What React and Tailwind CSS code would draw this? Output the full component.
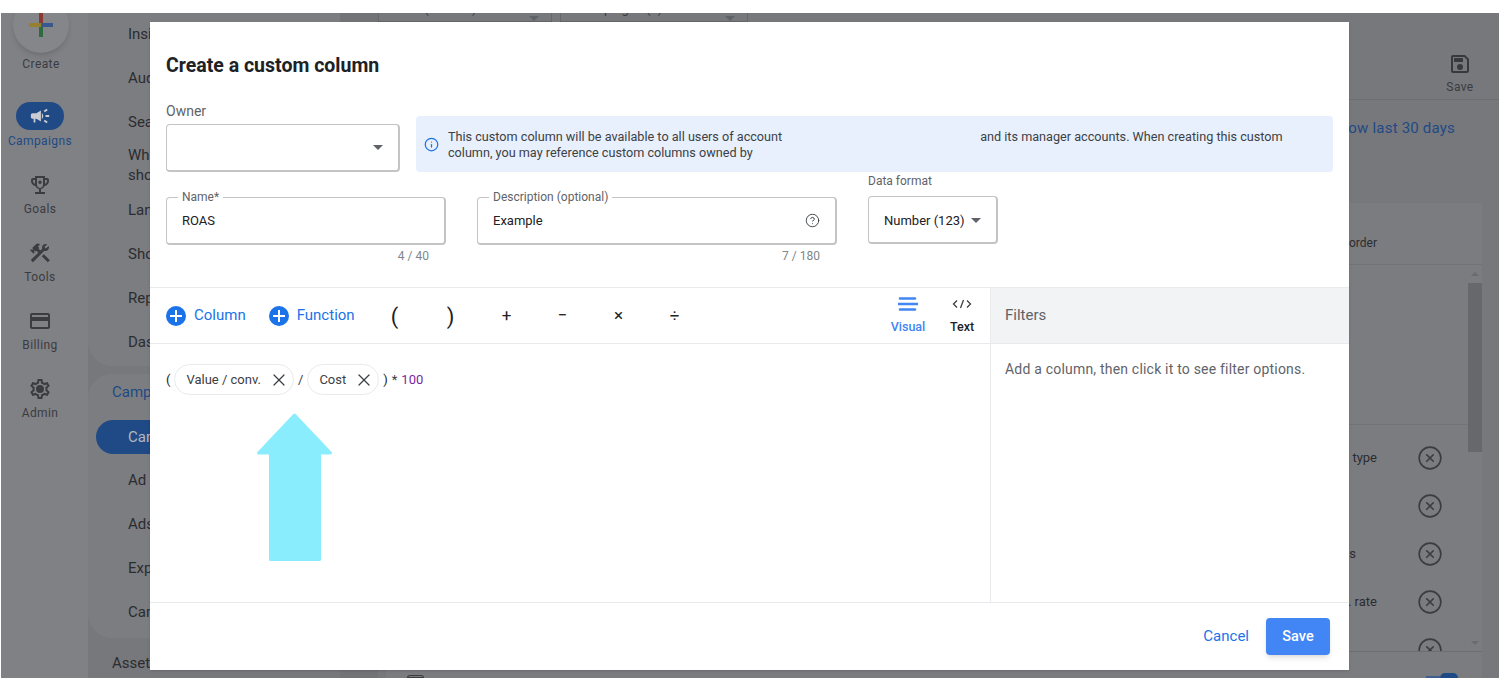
import React from "react";
import { CircleHelp, CircleX, Info, X } from "lucide-react";

const navTop = ["Insights", "Audiences", "Search terms"];
const navMid = ["Landing pages", "Shopping", "Reports", "Dashboards"];
const navCampaigns = ["Ad groups", "Ads", "Experiments", "Campaign groups"];
const operators = ["(", ")", "+", "−", "×", "÷"];
const rows = [
  { label: "Campaign type", pad: "pr-0" },
  { label: "", pad: "pr-0" },
  { label: "Conversions", pad: "pr-[21px]" },
  { label: "Conv. rate", pad: "pr-0" },
  { label: "", pad: "pr-0" },
];

const MaterialIcon = ({ d, className }) => (
  <svg viewBox="0 0 24 24" fill="currentColor" fillRule="evenodd" className={className}>
    <path d={d} />
  </svg>
);

const Caret = ({ className }) => (
  <div className={`w-0 h-0 border-x-[5px] border-x-transparent border-t-[5px] border-t-[#5f6368] ${className || ""}`} />
);

const SideItem = ({ label, children }) => (
  <div className="h-[68px] flex flex-col items-center text-[#3b3c3f]">
    <div className="h-[36px] flex items-center justify-center">{children}</div>
    <span className="-mt-[2px] text-xs leading-[16px] tracking-[0.4px]">{label}</span>
  </div>
);

const PlusButton = ({ label }) => (
  <button className="flex items-center gap-2 text-[15px] text-[#1a73e8]">
    <svg viewBox="0 0 20 20" className="w-5 h-5">
      <circle cx="10" cy="10" r="10" fill="#1a73e8" />
      <path d="M10 4v12M4 10h12" stroke="#fff" strokeWidth="2" />
    </svg>
    {label}
  </button>
);

const Chip = ({ label }) => (
  <span className="h-[31px] flex items-center gap-2 pl-[11px] pr-1 rounded-full border border-[#e8eaed] text-[#3c4043]">
    {label}
    <X className="w-5 h-5 text-[#3c4043]" strokeWidth={1.5} />
  </span>
);

const Field = ({ label, value, count, width, children }) => (
  <div className={`${width} mt-[25px]`}>
    <div className="relative h-[48px] flex items-center justify-between px-[15px] border border-[#c4c4c4] border-b-2 border-r-2 rounded-[4px] text-[13px] text-[#202124]">
      <span className="absolute left-[11px] -top-[8px] px-1 bg-white text-xs leading-[14px] text-[#5f6368]">{label}</span>
      {value}
      {children}
    </div>
    <div className="mt-1 pr-[17px] text-right text-xs leading-[14px] text-[#80868b]">{count}</div>
  </div>
);

const App = () => {
  return (
    <div className="w-[1500px] h-[682px] bg-white pt-[13px] pb-[4px] px-px font-['Roboto',sans-serif]">
      <div className="relative h-full flex overflow-hidden bg-[#77787c]">
        {/* Sidebar */}
        <div className="w-[87px] shrink-0 bg-[#808185] flex flex-col pr-[7px]">
          <div className="flex flex-col items-center">
            <div className="w-14 h-14 -mt-4 rounded-full bg-[#85868a] shadow-md flex items-center justify-center">
              <svg viewBox="0 0 24 24" className="w-6 h-6">
                <path d="M12 0v12" stroke="#8a3a33" strokeWidth="4" />
                <path d="M12 12v12" stroke="#2f6b3e" strokeWidth="4" />
                <path d="M0 12h12" stroke="#94802f" strokeWidth="4" />
                <path d="M12 12h12" stroke="#38598f" strokeWidth="4" />
              </svg>
            </div>
            <span className="mt-[3px] text-xs leading-[16px] tracking-[0.4px] text-[#3b3c3f]">Create</span>
          </div>
          <div className="mt-[30px] pr-[2px] flex flex-col items-center">
            <div className="w-12 h-7 rounded-full bg-[#1f4a85] flex items-center justify-center">
              <MaterialIcon
                className="w-[22px] h-[22px] text-[#c9ccd2]"
                d="M18 11v2h4v-2h-4zm-2 6.61c.96.71 2.21 1.65 3.2 2.39.4-.53.8-1.07 1.2-1.6-.99-.74-2.24-1.68-3.2-2.4-.4.54-.8 1.08-1.2 1.61zM20.4 5.6c-.4-.53-.8-1.07-1.2-1.6-.99.74-2.24 1.68-3.2 2.4.4.53.8 1.07 1.2 1.6.96-.72 2.21-1.65 3.2-2.4zM4 9c-1.1 0-2 .9-2 2v2c0 1.1.9 2 2 2h1v4h2v-4h1l5 3V6L8 9H4zm11.5 3c0-1.33-.58-2.53-1.5-3.35v6.69c.92-.81 1.5-2.01 1.5-3.34z"
              />
            </div>
            <span className="mt-[3px] text-xs leading-[16px] tracking-[0.4px] text-[#1f4a85]">Campaigns</span>
          </div>
          <div className="mt-[18px] pr-[2px]">
            <SideItem label="Goals">
              <MaterialIcon
                className="w-6 h-6"
                d="M19 5h-2V3H7v2H5c-1.1 0-2 .9-2 2v1c0 2.55 1.92 4.63 4.39 4.94.63 1.5 1.98 2.63 3.61 2.96V19H7v2h10v-2h-4v-3.1c1.63-.33 2.98-1.46 3.61-2.96C19.08 12.63 21 10.55 21 8V7c0-1.1-.9-2-2-2zM5 8V7h2v3.82C5.84 10.4 5 9.3 5 8zm10 4c0 1.65-1.35 3-3 3s-3-1.35-3-3V5h6v7zm4-4c0 1.3-.84 2.4-2 2.82V7h2v1zM12 7.5a1.7 1.7 0 1 0 0 3.4 1.7 1.7 0 0 0 0-3.4z"
              />
            </SideItem>
            <SideItem label="Tools">
              <MaterialIcon
                className="w-6 h-6"
                d="M13.78 15.3l6 6 2.11-2.16-6-6zM17.5 10c1.93 0 3.5-1.57 3.5-3.5 0-.58-.16-1.12-.41-1.6l-2.7 2.7-1.49-1.49 2.7-2.7c-.48-.25-1.02-.41-1.6-.41C15.57 3 14 4.57 14 6.5c0 .41.08.8.21 1.16l-1.85 1.85-1.78-1.78.71-.71-1.41-1.41L12 3.49c-1.17-1.17-3.07-1.17-4.24 0L4.22 7.03l1.41 1.41H2.81l-.71.71 3.54 3.54.71-.71V9.15l1.41 1.41.71-.71 1.78 1.78-7.41 7.41 2.12 2.12L16.34 9.79c.36.13.75.21 1.16.21z"
              />
            </SideItem>
            <SideItem label="Billing">
              <MaterialIcon
                className="w-6 h-6"
                d="M20 4H4c-1.1 0-2 .9-2 2v12c0 1.1.9 2 2 2h16c1.1 0 2-.9 2-2V6c0-1.1-.9-2-2-2zm0 14H4v-6h16v6zm0-10H4V6h16v2z"
              />
            </SideItem>
            <SideItem label="Admin">
              <MaterialIcon
                className="w-6 h-6 -mt-px"
                d="M19.43 12.98c.04-.32.07-.64.07-.98 0-.34-.03-.66-.07-.98l2.11-1.65c.19-.15.24-.42.12-.64l-2-3.46c-.09-.16-.26-.25-.44-.25-.06 0-.12.01-.17.03l-2.49 1c-.52-.4-1.08-.73-1.69-.98l-.38-2.65C14.46 2.18 14.25 2 14 2h-4c-.25 0-.46.18-.49.42l-.38 2.65c-.61.25-1.17.59-1.69.98l-2.49-1c-.06-.02-.12-.03-.18-.03-.17 0-.34.09-.43.25l-2 3.46c-.13.22-.07.49.12.64l2.11 1.65c-.04.32-.07.65-.07.98 0 .33.03.66.07.98l-2.11 1.65c-.19.15-.24.42-.12.64l2 3.46c.09.16.26.25.44.25.06 0 .12-.01.17-.03l2.49-1c.52.4 1.08.73 1.69.98l.38 2.65c.03.24.24.42.49.42h4c.25 0 .46-.18.49-.42l.38-2.65c.61-.25 1.17-.59 1.69-.98l2.49 1c.06.02.12.03.18.03.17 0 .34-.09.43-.25l2-3.46c.12-.22.07-.49-.12-.64l-2.11-1.65zm-1.98-1.71c.04.31.05.52.05.73 0 .21-.02.43-.05.73l-.14 1.13.89.7 1.08.84-.7 1.21-1.27-.51-1.04-.42-.9.68c-.43.32-.84.56-1.25.73l-1.06.43-.16 1.13-.2 1.35h-1.4l-.19-1.35-.16-1.13-1.06-.43c-.43-.18-.83-.41-1.23-.71l-.91-.7-1.06.43-1.27.51-.7-1.21 1.08-.84.89-.7-.14-1.13c-.03-.31-.05-.54-.05-.74s.02-.43.05-.73l.14-1.13-.89-.7-1.08-.84.7-1.21 1.27.51 1.04.42.9-.68c.43-.32.84-.56 1.25-.73l1.06-.43.16-1.13.2-1.35h1.39l.19 1.35.16 1.13 1.06.43c.43.18.83.41 1.23.71l.91.7 1.06-.43 1.27-.51.7 1.21-1.07.85-.89.7.14 1.13zM12 8a4 4 0 1 0 0 8 4 4 0 0 0 0-8z"
              />
            </SideItem>
          </div>
        </div>

        {/* Nav */}
        <div className="w-[252px] shrink-0 flex flex-col text-[15px] text-[#2b2c2f]">
          <div className="h-[353px] rounded-bl-[24px] bg-[#7c7d81] pl-10 flex flex-col">
            {navTop.map((item, i) => (
              <div key={item} className={`h-[44px] flex items-center ${i === 0 ? "-mt-[1px]" : ""}`}>{item}</div>
            ))}
            <div className="h-[42px] leading-[20px] mt-[1px] w-[150px]">When and where ads showed</div>
            <div className="h-[1px]" />
            {navMid.map((item) => (
              <div key={item} className="h-[44px] flex items-center">{item}</div>
            ))}
          </div>
          <div className="mt-2 h-[264px] rounded-l-[24px] bg-[#7c7d81] flex flex-col pl-2">
            <div className="h-[28px] mt-[1px] pl-4 flex items-end text-[#1f4a85]">Campaigns</div>
            <div className="mt-[17px] h-[34px] rounded-l-full bg-[#1f4a85] pl-8 flex items-center text-[#b4b7bd]">Campaigns</div>
            <div className="mt-1">
              {navCampaigns.map((item) => (
                <div key={item} className="h-[44px] pl-8 flex items-center">{item}</div>
              ))}
            </div>
          </div>
          <div className="mt-[15px] pl-6 leading-[20px]">Assets</div>
        </div>

        <div className="w-[38px] shrink-0 bg-[#727377]" />

        {/* Page behind the dialog */}
        <div className="flex-1 flex flex-col min-w-0">
          <div className="h-[87px] shrink-0 border-b border-[#6d6e72] flex justify-between">
            <div className="flex gap-2 text-[13px] text-[#3b3c3f]">
              <div className="w-[174px] h-[9px] border-x border-b border-[#66676b] flex justify-between items-end pl-[14px] pr-3">
                <span className="-mt-[14px] self-start">View (2 filters)</span>
                <Caret className="border-t-[#2b2c2f]" />
              </div>
              <div className="w-[188px] h-[9px] border-x border-b border-[#66676b] flex justify-between items-end pl-[16px] pr-3">
                <span className="-mt-[14px] self-start">Campaigns (2)</span>
                <Caret className="border-t-[#2b2c2f]" />
              </div>
            </div>
            <div className="w-[66px] mr-[6px] flex items-end">
              <div className="flex-1 flex flex-col items-center pb-[4px] text-[#38393c]">
                <MaterialIcon
                  className="w-6 h-6"
                  d="M17 3H5c-1.11 0-2 .9-2 2v14c0 1.1.89 2 2 2h14c1.1 0 2-.9 2-2V7l-4-4zm2 16H5V5h11.17L19 7.83V19zm-7-7a3 3 0 1 0 0 6 3 3 0 0 0 0-6zM6 6h9v4H6V6z"
                />
                <span className="mt-[3px] text-xs leading-[16px] tracking-[0.4px] text-[#3b3c3f]">Save</span>
              </div>
            </div>
          </div>
          <div className="h-[103px] shrink-0 pt-[18px] pr-[44px] text-right text-[15px] leading-[20px] tracking-[0.2px] text-[#1f4a85]">
            Show last 30 days
          </div>
          <div className="flex-1 min-h-0 ml-2 mr-[17px] bg-[#7b7c80] flex flex-col">
            <div className="h-[62px] shrink-0 border-b border-[#727377] flex items-center justify-end pr-[105px] pt-[18px] text-xs text-[#2b2c2f]">
              Column order
            </div>
            <div className="h-[387px] shrink-0 flex overflow-hidden border-b border-[#6d6e72]">
              <div className="flex-1 min-w-0">
                <div className="h-[160px] border-b border-[#727377]" />
                <div className="pt-[9px]">
                  {rows.map((row, i) => (
                    <div key={i} className="h-[48px] flex items-center justify-end text-[13px] text-[#2b2c2f]">
                      <span className={`${row.pad} mr-[40px]`}>{row.label}</span>
                      <CircleX className="w-[26px] h-[26px] mr-[25px] text-[#3b3c3f] shrink-0" strokeWidth={1.5} />
                    </div>
                  ))}
                </div>
              </div>
              <div className="w-[14px] shrink-0 flex flex-col items-center">
                <div className="mt-[7px] mb-[7px] h-0 w-0 border-x-[4px] border-x-transparent border-b-[4px] border-b-[#6a6b6f]" />
                <div className="h-[169px] w-full bg-[#67686c]" />
                <div className="mt-auto mb-[6px] h-0 w-0 border-x-[4px] border-x-transparent border-t-[4px] border-t-[#6a6b6f]" />
              </div>
            </div>
            <div className="flex-1 min-h-0 flex justify-between items-end pl-[21px] pr-[24px]">
              <div className="w-[17px] h-[3px] border border-[#3b3c3f] rounded-t-sm" />
              <div className="flex items-end">
                <div className="w-[14px] h-[2px] bg-[#3f5f8f]" />
                <div className="w-[18px] h-[5px] rounded-t-full bg-[#1f4a85]" />
              </div>
            </div>
          </div>
        </div>

        {/* Dialog */}
        <div className="absolute left-[149px] top-[9px] w-[1199px] h-[648px] bg-white flex flex-col shadow-sm">
          <div className="h-[265px] shrink-0 px-4">
            <h2 className="pt-[31px] text-[19.5px] leading-[26px] font-bold text-[#202124]">Create a custom column</h2>
            <div className="mt-[23px] flex items-end gap-4">
              <div className="w-[234px] shrink-0">
                <label className="block text-sm leading-[18px] text-[#5f6368]">Owner</label>
                <div className="mt-1 h-[48px] flex items-center justify-end pr-[15px] border border-[#c4c4c4] border-b-2 border-r-2 rounded-[4px]">
                  <Caret />
                </div>
              </div>
              <div className="flex-1 h-[56px] rounded-[4px] bg-[#e8f0fe] flex items-center gap-[9px] pl-2 pr-[48px]">
                <Info className="w-[15px] h-[15px] shrink-0 text-[#1a73e8]" strokeWidth={2} />
                <p className="pt-px text-[12.65px] leading-[16px] text-[#3c4043]">
                  This custom column will be available to all users of account
                  <span className="inline-block w-[198px]" />
                  and its manager accounts. When creating this custom column, you may reference custom columns owned by
                </p>
              </div>
            </div>
            <div className="flex items-start gap-[31px]">
              <Field label="Name*" value="ROAS" count="4 / 40" width="w-[280px]" />
              <Field label="Description (optional)" value="Example" count="7 / 180" width="w-[360px]">
                <CircleHelp className="w-[15px] h-[15px] text-[#3c4043]" strokeWidth={1.5} />
              </Field>
              <div className="w-[130px]">
                <label className="block text-xs leading-[18px] text-[#5f6368]">Data format</label>
                <div className="mt-[6px] h-[48px] flex items-center justify-between pl-[15px] pr-[15px] pt-[2px] border border-[#c4c4c4] border-b-2 border-r-2 rounded-[4px] text-[13px] text-[#202124]">
                  Number (123)
                  <Caret />
                </div>
              </div>
            </div>
          </div>

          <div className="flex-1 min-h-0 flex border-t border-[#e8eaed]">
            <div className="flex-1 min-w-0 border-r border-[#e8eaed]">
              <div className="h-[56px] border-b border-[#e8eaed] flex items-center pl-4 pr-px">
                <PlusButton label="Column" />
                <div className="w-[23px]" />
                <PlusButton label="Function" />
                <div className="ml-3 flex items-center pt-px">
                  {operators.map((op, i) => (
                    <span key={i} className={`w-[56px] text-center text-[#202124] ${i < 2 ? "text-[22px]" : "text-[17px]"}`}>{op}</span>
                  ))}
                </div>
                <div className="ml-auto flex text-[12.5px] font-medium">
                  <div className="w-[54px] flex flex-col items-center text-[#4285f4]">
                    <svg viewBox="0 0 20 14" className="w-5 h-[14px]">
                      <path d="M2 1.5h15M0.5 7h19M2 12.5h15" stroke="#4285f4" strokeWidth="2.6" strokeLinecap="round" />
                    </svg>
                    <span className="mt-2 leading-[16px]">Visual</span>
                  </div>
                  <div className="w-[54px] flex flex-col items-center text-[#202124]">
                    <svg viewBox="0 0 20 14" fill="none" stroke="#3c4043" strokeWidth="1.3" className="w-5 h-[14px]">
                      <path d="M5 3.5L1.5 7L5 10.5M15 3.5L18.5 7L15 10.5M11.5 3L8.5 11" />
                    </svg>
                    <span className="mt-2 leading-[16px]">Text</span>
                  </div>
                </div>
              </div>
              <div className="pt-[20px] pl-4 flex items-center gap-[4px] text-[13px] text-[#3c4043]">
                <span className="text-[#202124]">(</span>
                <Chip label="Value / conv." />
                <span>/</span>
                <Chip label="Cost" />
                <span className="text-[#202124]">)</span>
                <span>*</span>
                <span className="text-[#7b1fa2]">100</span>
              </div>
              <svg viewBox="0 0 75 148" className="block w-[75px] h-[148px] ml-[107px] mt-[18px]">
                <path d="M37.5 2 L73.5 40 H62.5 V146.5 H13.5 V40 H1.5 Z" fill="#8aedfd" stroke="#8aedfd" strokeWidth="3" strokeLinejoin="round" />
              </svg>
            </div>
            <div className="w-[358px] shrink-0">
              <div className="h-[56px] bg-[#f1f3f4] border-b border-[#e8eaed] flex items-center px-[14px] text-[15px] text-[#5f6368]">Filters</div>
              <p className="pt-[15px] px-[14px] text-sm leading-[20px] tracking-[0.2px] text-[#5f6368]">Add a column, then click it to see filter options.</p>
            </div>
          </div>

          <div className="h-[68px] shrink-0 border-t border-[#e8eaed] flex items-center justify-end gap-[17px] pr-[19px]">
            <button className="text-[15px] text-[#1a73e8]">Cancel</button>
            <button className="w-16 h-[37px] rounded-[4px] bg-[#4285f4] text-[14.5px] font-medium text-white shadow-md">Save</button>
          </div>
        </div>
      </div>
    </div>
  );
};

export default App;
